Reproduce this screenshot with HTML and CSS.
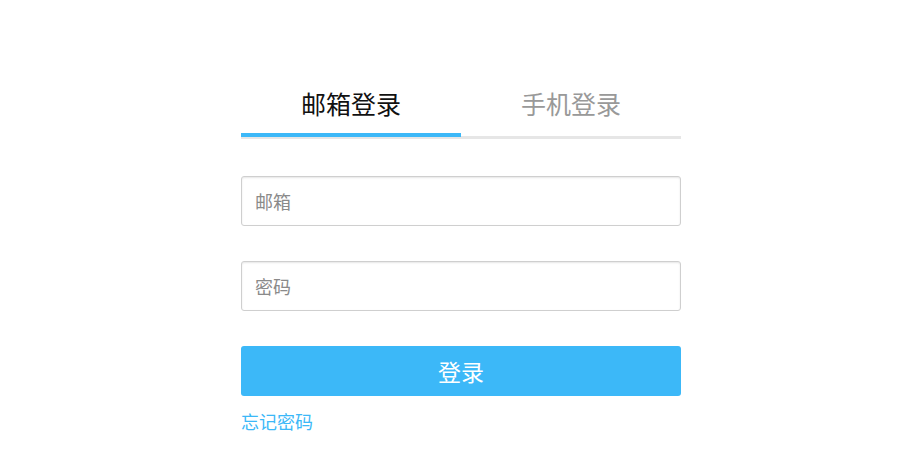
FILE: index.html
```html
<!DOCTYPE html>
<html lang="zh">
<head>
<meta charset="utf-8">
<title>登录</title>
<link rel="stylesheet" href="styles.css">
</head>
<body>
<div class="wrap">
  <div class="login">
    <div class="tabs">
      <div class="tab active">邮箱登录</div>
      <div class="tab">手机登录</div>
    </div>
    <form class="form">
      <input class="field" type="text" placeholder="邮箱">
      <input class="field" type="password" placeholder="密码">
      <button class="submit" type="button">登录</button>
      <a class="forgot" href="#">忘记密码</a>
    </form>
  </div>
</div>
</body>
</html>
```

FILE: styles.css
```css
html, body {
  margin: 0;
  padding: 0;
  background: #fff;
}
body {
  font-family: "Noto Sans CJK SC", "Noto Sans", "Liberation Sans", sans-serif;
}
.wrap {
  display: flex;
  justify-content: center;
  padding-top: 86px;
}
.login {
  width: 440px;
  margin-left: 7px;
}
.tabs {
  display: flex;
  border-bottom: 3px solid #e6e6e6;
}
.tab {
  flex: 1;
  text-align: center;
  font-size: 25px;
  line-height: 34px;
  padding-bottom: 13px;
  color: #999;
  border-bottom: 4px solid transparent;
  margin-bottom: -1px;
}
.tab.active {
  color: #111;
  border-bottom-color: #3cb8f8;
}
.form {
  display: flex;
  flex-direction: column;
  padding-top: 37px;
}
.field {
  box-sizing: border-box;
  height: 50px;
  margin: 0 0 35px;
  padding: 0 13px;
  border: 1px solid #cfcfcf;
  border-radius: 3px;
  box-shadow: inset 0 1px 2px rgba(0, 0, 0, 0.1);
  font-family: inherit;
  font-size: 18px;
  color: #333;
  outline: none;
}
.field::placeholder {
  color: #8a8a8a;
}
.submit {
  height: 50px;
  border: 0;
  border-radius: 3px;
  background: #3cb8f8;
  color: #fff;
  font-family: inherit;
  font-size: 23px;
  padding: 0;
}
.forgot {
  align-self: flex-start;
  margin-top: 12px;
  font-size: 18px;
  line-height: 26px;
  color: #3cb8f8;
  text-decoration: none;
}
```
